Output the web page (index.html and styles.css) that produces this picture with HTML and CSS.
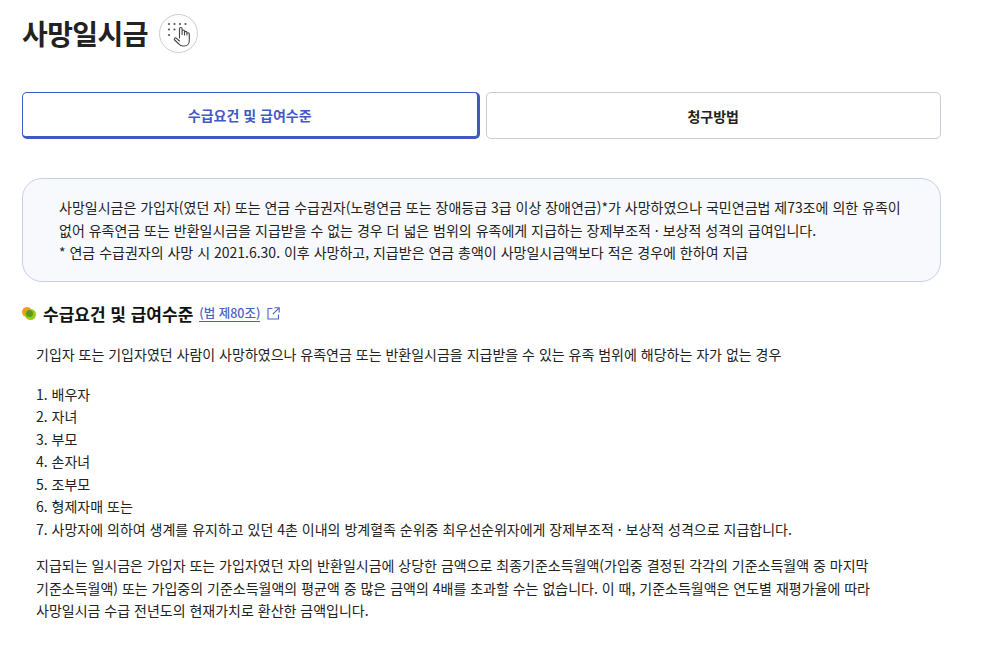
FILE: index.html
```html
<!DOCTYPE html>
<html lang="ko">
<head>
<meta charset="utf-8">
<title>사망일시금</title>
<link rel="stylesheet" href="styles.css">
</head>
<body>
<main class="page">
  <header class="title-row">
    <h1 class="title">사망일시금</h1>
    <button class="sign-btn" type="button" aria-label="수어">
      <svg class="sign-icon" width="24" height="26" viewBox="0 0 24 26">
        <g fill="#555">
          <circle cx="2" cy="2" r="1.1"/><circle cx="7.5" cy="2" r="1.1"/><circle cx="13" cy="2" r="1.1"/><circle cx="18.5" cy="2" r="1.1"/>
          <circle cx="2" cy="7.5" r="1.1"/><circle cx="7.5" cy="7.5" r="1.1"/>
          <circle cx="2" cy="13" r="1.1"/>
        </g>
        <path d="M12.5 16V6.8a1.3 1.3 0 0 1 2.6 0V12.5M15.1 12V9.2a1.2 1.2 0 0 1 2.4 0V13M17.5 12.5V10.6a1.2 1.2 0 0 1 2.4 0V13M19.9 13V12a1.2 1.2 0 0 1 2.4 0V18.5c0 3-2 5.5-5 5.5h-1.6c-1.7 0-2.8-.8-3.8-2L7.6 18c-1-1.2.6-2.8 1.9-1.7L12.5 19" fill="#fff" stroke="#444" stroke-width="1.1" stroke-linejoin="round" stroke-linecap="round"/>
      </svg>
    </button>
  </header>

  <nav class="tabs">
    <a class="tab tab-active">수급요건 및 급여수준</a>
    <a class="tab">청구방법</a>
  </nav>

  <section class="notice">
    <p>사망일시금은 가입자(였던 자) 또는 연금 수급권자(노령연금 또는 장애등급 3급 이상 장애연금)*가 사망하였으나 국민연금법 제73조에 의한 유족이</p>
    <p>없어 유족연금 또는 반환일시금을 지급받을 수 없는 경우 더 넓은 범위의 유족에게 지급하는 장제부조적 · 보상적 성격의 급여입니다.</p>
    <p>* 연금 수급권자의 사망 시 2021.6.30. 이후 사망하고, 지급받은 연금 총액이 사망일시금액보다 적은 경우에 한하여 지급</p>
  </section>

  <h2 class="section-title">
    <span class="bullet"><i class="dot-orange"></i><i class="dot-green"></i><i class="dot-mix"></i></span>
    <span>수급요건 및 급여수준</span>
    <a class="law-link">(법 제80조)</a>
    <svg class="ext-icon" width="13" height="13" viewBox="0 0 13 13" fill="none" stroke="#4a63c4" stroke-width="1.1">
      <path d="M5.5 1.5H1v10.5h10.5V7.5"/>
      <path d="M7.5 .8h4.7v4.7M12.2 .8L5.8 7.2"/>
    </svg>
  </h2>

  <div class="content">
    <p class="para">기입자 또는 기입자였던 사람이 사망하였으나 유족연금 또는 반환일시금을 지급받을 수 있는 유족 범위에 해당하는 자가 없는 경우</p>
    <ol class="list">
      <li>1. 배우자</li>
      <li>2. 자녀</li>
      <li>3. 부모</li>
      <li>4. 손자녀</li>
      <li>5. 조부모</li>
      <li>6. 형제자매 또는</li>
      <li>7. 사망자에 의하여 생계를 유지하고 있던 4촌 이내의 방계혈족 순위중 최우선순위자에게 장제부조적 · 보상적 성격으로 지급합니다.</li>
    </ol>
    <p class="para">지급되는 일시금은 가입자 또는 가입자였던 자의 반환일시금에 상당한 금액으로 최종기준소득월액(가입중 결정된 각각의 기준소득월액 중 마지막<br>기준소득월액) 또는 가입중의 기준소득월액의 평균액 중 많은 금액의 4배를 초과할 수는 없습니다. 이 때, 기준소득월액은 연도별 재평가율에 따라<br>사망일시금 수급 전년도의 현재가치로 환산한 금액입니다.</p>
  </div>
</main>
</body>
</html>
```

FILE: styles.css
```css
* { box-sizing: border-box; }
html, body { margin: 0; padding: 0; background: #fff; overflow: hidden; }
body {
  font-family: "Noto Sans CJK KR", "Noto Sans", sans-serif;
  color: #222;
  font-size: 14px;
  height: 662px;
}
p, h1, h2, ol { margin: 0; padding: 0; }
.page { width: 941px; padding: 13px 0 0 22px; }

.title-row { display: flex; align-items: center; gap: 11px; height: 41px; }
.title { font-size: 28px; font-weight: 700; line-height: 41px; color: #222; letter-spacing: -0.6px; }
.sign-btn {
  width: 39px; height: 39px; border: 1px solid #ccc; border-radius: 50%;
  background: #fff; padding: 0; display: flex; align-items: center; justify-content: center;
}
.sign-icon { margin: 2px 0 0 1px; }

.tabs { display: flex; gap: 6px; margin-top: 38px; }
.tab {
  flex: 1 1 0; height: 47px; display: flex; align-items: center; justify-content: center;
  border: 1px solid #c9ccd4; border-radius: 5px; font-size: 14px; font-weight: 700; color: #222;
  background: #fff;
}
.tab-active {
  border-color: #3f5bc3; border-width: 1px 3px 3px 1px; color: #3f5bc3;
}

.notice {
  margin-top: 39px; height: 104px; padding: 17px 36px 0;
  background: #f8f9fc; border: 1px solid #c5cfee; border-radius: 20px;
  line-height: 22.5px; font-size: 14px; color: #222;
}
.notice p { white-space: nowrap; }

.section-title {
  display: flex; align-items: center; margin-top: 18px; height: 26px;
  font-size: 17px; font-weight: 700; color: #111;
}
.bullet { position: relative; width: 21px; height: 16px; flex: none; margin-right: 0; }
.bullet i { position: absolute; display: block; border-radius: 50%; }
.dot-orange { left: 0; top: 2px; width: 10px; height: 10px; background: #f59d0e; }
.dot-green { left: 3px; top: 4px; width: 11px; height: 11px; background: #9ccc10; }
.dot-mix { left: 4px; top: 5px; width: 7px; height: 7px; background: #5a9a22; }
.law-link {
  margin-left: 6px; font-size: 12.5px; font-weight: 500; color: #4a63c4;
  border-bottom: 1px solid #4a63c4; line-height: 16px;
}
.ext-icon { margin-left: 7px; }

.content { padding: 17px 0 0 14px; font-size: 14px; line-height: 22.5px; color: #222; }
.para { white-space: nowrap; }
.list { list-style: none; margin: 17px 0 14px; }
```
